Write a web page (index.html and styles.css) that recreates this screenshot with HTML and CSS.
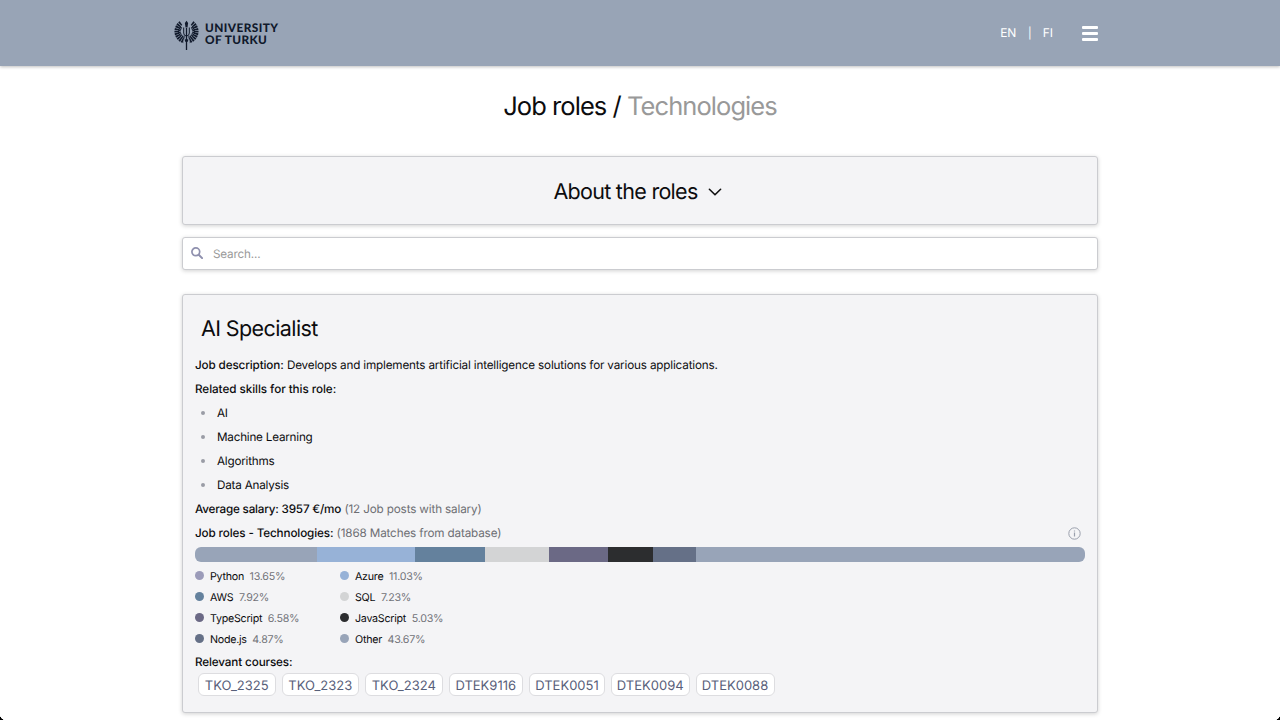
FILE: index.html
```html
<!DOCTYPE html>
<html lang="en">
<head>
<meta charset="utf-8">
<title>Job roles</title>
<link rel="stylesheet" href="styles.css">
</head>
<body>
<header class="topbar">
  <div class="brand">
    <svg class="emblem" width="27" height="31" viewBox="0 0 27 31" fill="none" stroke="#10192b">
      <path d="M13.500 8V30" stroke-width="1.300"/>
      <path d="M13.500 .8l1.600 2.200-.6 4.500h-2L11.900 3z" fill="#10192b" stroke="none"/>
      <path d="M10.700 7.500v5.500q0 3 2.800 3t2.800-3V7.500" stroke-width="1"/>
      <path d="M12 20.500h3" stroke-width="2.400"/>
      <path d="M8 3.200A10 10 0 0 0 11 21M19 3.200A10 10 0 0 1 16 21" stroke-width="4.600" stroke-dasharray="1.600 .6"/>
      <path d="M8.300 7A6.300 6.300 0 0 0 11.500 17.600M18.700 7A6.300 6.300 0 0 1 15.500 17.600" stroke-width="2.600" stroke-dasharray="1.200 .55"/>
    </svg>
    <div class="brand-name">UNIVERSITY<br>OF TURKU</div>
  </div>
  <nav class="nav">
    <span class="lang-en">EN</span><span class="divider">|</span><span class="lang-fi">FI</span>
    <span class="menu"><i></i><i></i><i></i></span>
  </nav>
</header>
<main class="page">
  <h1 class="title"><span>Job roles /</span> <span class="inactive">Technologies</span></h1>
  <section class="panel about">
    <span class="about-text">About the roles</span>
    <svg width="14" height="8" viewBox="0 0 14 8" fill="none" stroke="#111" stroke-width="1.600" stroke-linecap="round" stroke-linejoin="round"><path d="M1.400 1.300L7 6.800l5.600-5.500"/></svg>
  </section>
  <div class="panel search">
    <svg width="12" height="12" viewBox="0 0 12 12" fill="none" stroke="#8f90ae"><circle cx="4.800" cy="4.800" r="3.900" stroke-width="1.700"/><path d="M7.700 7.700l3.400 3.400" stroke-width="2" stroke-linecap="round"/></svg>
    <span class="placeholder">Search...</span>
  </div>
  <article class="panel card">
    <h2 class="role">AI Specialist</h2>
    <p class="row"><b class="t-desc">Job description:</b> <span class="t-text">Develops and implements artificial intelligence solutions for various applications.</span></p>
    <p class="row"><b class="t-skills">Related skills for this role:</b></p>
    <ul class="skills"><li>AI</li><li>Machine Learning</li><li>Algorithms</li><li>Data Analysis</li></ul>
    <p class="row"><b class="t-salary">Average salary: 3957 €/mo</b> <span class="muted">(12 Job posts with salary)</span></p>
    <div class="row split"><p><b class="t-tech">Job roles - Technologies:</b> <span class="muted">(1868 Matches from database)</span></p>
      <svg class="info" width="13" height="13" viewBox="0 0 13 13" fill="none" stroke="#9a9fac"><circle cx="6.500" cy="6.500" r="5.700" stroke-width="1"/><path d="M6.500 5.600v3.800M6.500 3.400v1.200" stroke-width="1.200"/></svg>
    </div>
    <div class="bar"><i class="c-python seg-python"></i><i class="c-azure seg-azure"></i><i class="c-aws seg-aws"></i><i class="c-sql seg-sql"></i><i class="c-ts seg-ts"></i><i class="c-js seg-js"></i><i class="c-node seg-node"></i><i class="c-other seg-other"></i></div>
    <div class="legend">
      <div class="item"><i class="dot d-python"></i><span>Python</span><em>13.65%</em></div>
      <div class="item"><i class="dot c-azure"></i><span>Azure</span><em>11.03%</em></div>
      <div class="item"><i class="dot c-aws"></i><span>AWS</span><em>7.92%</em></div>
      <div class="item"><i class="dot c-sql"></i><span>SQL</span><em>7.23%</em></div>
      <div class="item"><i class="dot c-ts"></i><span>TypeScript</span><em>6.58%</em></div>
      <div class="item"><i class="dot c-js"></i><span>JavaScript</span><em>5.03%</em></div>
      <div class="item"><i class="dot c-node"></i><span>Node.js</span><em>4.87%</em></div>
      <div class="item"><i class="dot c-other"></i><span>Other</span><em>43.67%</em></div>
    </div>
    <p class="courses-title"><b class="t-courses">Relevant courses:</b></p>
    <div class="courses"><span class="tko">TKO_2325</span><span class="tko">TKO_2323</span><span class="tko">TKO_2324</span><span class="w75">DTEK9116</span><span class="w77">DTEK0051</span><span class="w79">DTEK0094</span><span class="w80">DTEK0088</span></div>
  </article>
</main>
<i class="corner left"></i><i class="corner right"></i>
</body>
</html>
```
FILE: styles.css
```css
* { box-sizing: border-box; }
body { margin: 0; height: 720px; overflow: hidden; background: #fff; color: #0c0c0e; font-family: Inter, "Liberation Sans", sans-serif; font-size: 11.7px; text-rendering: geometricPrecision; }
h1, h2, p, ul { margin: 0; padding: 0; font-weight: 400; }
i, em { font-style: normal; }
svg { display: block; flex: none; }
.topbar { height: 66px; padding: 0 182px 0 173px; background: #98a4b6; display: flex; justify-content: space-between; box-shadow: 0 1px 3px rgba(0,0,0,.25); }
.brand { display: flex; padding-top: 20px; gap: 5px; }
.brand-name { color: #10192b; font: 900 11.8px/12px Lato, sans-serif; padding-top: 2px; white-space: nowrap; letter-spacing: .42px; }
.nav { display: flex; align-items: center; color: #fff; font-size: 12px; padding-bottom: 1px; }
.lang-en { letter-spacing: -.3px; }
.divider { margin: 0 11px 0 12px; font-size: 11px; }
.menu { display: flex; flex-direction: column; gap: 3px; width: 16px; margin-left: 29px; padding-top: 1px; }
.menu i { height: 3px; background: #fff; border-radius: 1px; }
.page { width: 916px; margin: 0 auto; }
.title { height: 90px; line-height: 82px; text-align: center; font-size: 25.5px; letter-spacing: -.94px; white-space: nowrap; }
.inactive { color: #999; }
.panel { border: 1px solid #cbccd0; border-radius: 3px; background: #f4f4f6; box-shadow: 0 1px 4px rgba(0,0,0,.18); }
.about { height: 69px; display: flex; align-items: center; justify-content: center; gap: 10px; font-size: 21.5px; letter-spacing: -.7px; padding-right: 5px; }
.about-text { padding-top: 3px; }
.about svg { margin-top: 2px; }
.search { height: 33px; margin-top: 12px; background: #fff; display: flex; align-items: center; padding-left: 8px; gap: 10px; color: #999; letter-spacing: -.17px; }
.search svg { margin-bottom: 1px; }
.card { height: 419px; margin-top: 24px; padding: 0 12px; }
.role { height: 58px; padding: 0 6px; line-height: 69px; font-size: 21.5px; letter-spacing: -.6px; }
.row, .skills li { height: 24px; line-height: 24px; white-space: nowrap; }
b { font-weight: 500; letter-spacing: -.13px; }
.t-skills { letter-spacing: -.06px; }
.t-salary { letter-spacing: -.2px; }
.t-text { letter-spacing: -.165px; }
.muted { color: #6d6e73; letter-spacing: -.15px; }
.skills { list-style: none; letter-spacing: -.22px; }
.skills li { display: flex; align-items: center; gap: 12px; padding-left: 6px; }
.skills li::before { content: ""; width: 4px; height: 4px; border-radius: 50%; background: #9a9ca6; }
.split { display: flex; justify-content: space-between; }
.info { margin: 6px 4px 0 0; }
.bar { display: flex; height: 15px; margin-top: 2px; border-radius: 6px; overflow: hidden; width: 889.500px; }
.c-python, .c-other { background: #98a4b8; }
.d-python { background: #9b9bb9; }
.c-azure { background: #97b2d7; }
.c-aws { background: #64819d; }
.c-sql { background: #d3d4d5; }
.c-ts { background: #6b6985; }
.c-js { background: #2c2d2f; }
.c-node { background: #657087; }
.seg-python { width: 122px; }
.seg-azure { width: 98px; }
.seg-aws { width: 70px; }
.seg-sql { width: 64px; }
.seg-ts { width: 59px; }
.seg-js { width: 45px; }
.seg-node { width: 43px; }
.seg-other { flex: 1; }
.legend { display: grid; grid-template-columns: 145px 145px; grid-auto-rows: 21px; margin-top: 3px; font-size: 10.7px; letter-spacing: -.26px; }
.item { display: flex; align-items: center; white-space: nowrap; }
.item span, .item em { padding-top: 1px; }
.dot { width: 9px; height: 9px; border-radius: 50%; margin-right: 6px; }
.item em { color: #717278; margin-left: 5.600px; }
.courses-title { height: 23px; line-height: 25px; margin-top: 1px; }
.courses { display: flex; gap: 6px; padding-left: 3px; }
.courses span { height: 23px; line-height: 23px; border: 1px solid #dddde0; border-radius: 6px; background: #fff; color: #58607a; font-size: 13px; text-align: center; white-space: nowrap; padding-top: 1px; }
.courses .tko { width: 77.500px; }
.courses .w75 { width: 74.500px; }
.courses .w77 { width: 76px; }
.courses .w79 { width: 78.500px; }
.courses .w80 { width: 79px; }
.corner { position: absolute; bottom: 0; width: 6px; height: 6px; }
.left { left: 0; background: radial-gradient(circle at 100% 0, transparent 6px, #000 6.500px); }
.right { right: 0; background: radial-gradient(circle at 0 0, transparent 6px, #000 6.500px); }
```
